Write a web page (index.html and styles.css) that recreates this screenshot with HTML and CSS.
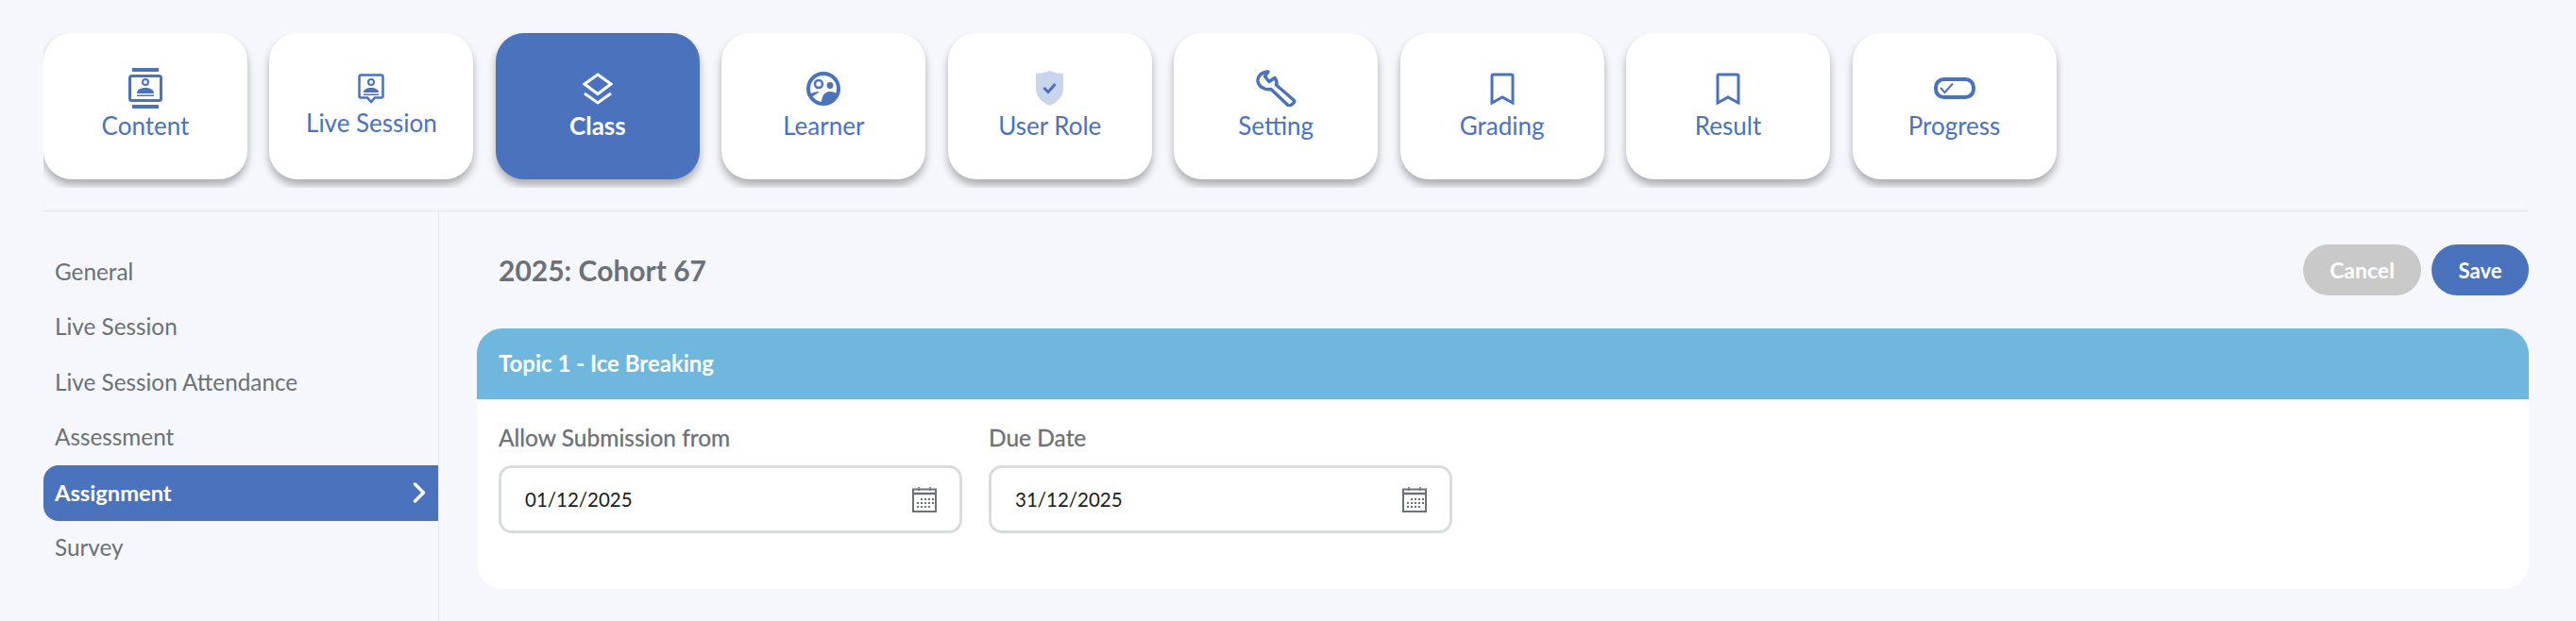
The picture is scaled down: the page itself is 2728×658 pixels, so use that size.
FILE: index.html
```html
<!DOCTYPE html>
<html lang="en">
<head>
  <meta charset="UTF-8">
  <meta name="viewport" content="width=device-width, initial-scale=1.0">
  <title>Class Assignment</title>
  <link rel="stylesheet" href="styles.css">
</head>
<body>
  <nav class="tiles">
    <a class="tile">
      <span class="icon-slot"><svg width="36" height="43" viewBox="0 0 36 43"><path d="M4 0h28v4H4zM4 39h28v4H4z" fill="#4a72bd"/><rect x="1.500" y="8.500" width="33" height="26" rx="2" fill="none" stroke="#4a72bd" stroke-width="3"/><circle cx="18" cy="15" r="3" fill="none" stroke="#4a72bd" stroke-width="2"/><path d="M9 27c0-4 4-6 9-6s9 2 9 6zM9 28.500h18V30H9z" fill="#4a72bd"/></svg></span>
      <span class="tile-label">Content</span>
    </a>
    <a class="tile tile-up">
      <span class="icon-slot"><svg width="28" height="32" viewBox="0 0 28 32"><path d="M3 1.500h22a1.500 1.500 0 0 1 1.500 1.500v21a1.500 1.500 0 0 1-1.500 1.500h-7L14 30l-4-4.500H3A1.500 1.500 0 0 1 1.500 24V3A1.500 1.500 0 0 1 3 1.500z" fill="none" stroke="#4a72bd" stroke-width="2.500"/><circle cx="14" cy="9" r="3" fill="none" stroke="#4a72bd" stroke-width="2"/><path d="M6 20c0-3.500 3.500-5 8-5s8 1.500 8 5zM6 21.500h16V23H6z" fill="#4a72bd"/></svg></span>
      <span class="tile-label">Live Session</span>
    </a>
    <a class="tile is-active">
      <span class="icon-slot"><svg width="32" height="34" viewBox="0 0 32 34"><path d="M16 2 30 12 16 22.500 2 12z" fill="none" stroke="#fff" stroke-width="3"/><path d="M2 22l14 10 14-10" fill="none" stroke="#fff" stroke-width="3"/></svg></span>
      <span class="tile-label">Class</span>
    </a>
    <a class="tile">
      <span class="icon-slot"><svg width="38" height="36" viewBox="0 0 38 36"><circle cx="19" cy="18" r="16" fill="none" stroke="#4a72bd" stroke-width="4"/><circle cx="14" cy="13" r="4" fill="none" stroke="#4a72bd" stroke-width="2.500"/><circle cx="26" cy="14.500" r="3.400" fill="#4a72bd"/><path d="M4 25c3-3 6-4 11-4l-4 3-5 3zM17 33c0-7 3-12 9-12 3 0 6 1 8 3-2 6-8 10-14 10z" fill="#4a72bd"/></svg></span>
      <span class="tile-label">Learner</span>
    </a>
    <a class="tile">
      <span class="icon-slot"><svg width="29" height="37" viewBox="0 0 29 37"><path d="M14.500 0c4 2 9 2.500 14.500 3V19c0 8-6 14-14.500 18C6 33 0 27 0 19V3C5.500 2.500 10.500 2 14.500 0z" fill="#c8d5ec"/><path d="M8.500 18l4.500 4.500L20.500 14" fill="none" stroke="#4a72bd" stroke-width="3"/></svg></span>
      <span class="tile-label">User Role</span>
    </a>
    <a class="tile">
      <span class="icon-slot"><svg width="43" height="39" viewBox="0 0 43 39"><path d="M13 2 9.500 7 14 12.500 20 8.500C22.500 12 22 15 21.500 16L40 32Q41.500 33.500 40 35L37 37.500Q35.500 39 34 37.500L16 20.500C10 22 3 18 2 12 1.500 7 6 2 13 2z" fill="none" stroke="#4a72bd" stroke-width="3.500" stroke-linejoin="round"/></svg></span>
      <span class="tile-label">Setting</span>
    </a>
    <a class="tile">
      <span class="icon-slot"><svg width="26" height="34" viewBox="0 0 26 34"><path d="M2 32V3.500A1.500 1.500 0 0 1 3.500 2h19A1.500 1.500 0 0 1 24 3.500V32l-11-6z" fill="none" stroke="#4a72bd" stroke-width="3"/></svg></span>
      <span class="tile-label">Grading</span>
    </a>
    <a class="tile">
      <span class="icon-slot"><svg width="26" height="34" viewBox="0 0 26 34"><path d="M2 32V3.500A1.500 1.500 0 0 1 3.500 2h19A1.500 1.500 0 0 1 24 3.500V32l-11-6z" fill="none" stroke="#4a72bd" stroke-width="3"/></svg></span>
      <span class="tile-label">Result</span>
    </a>
    <a class="tile">
      <span class="icon-slot"><svg width="44" height="23" viewBox="0 0 44 23"><rect x="2" y="2" width="40" height="19" rx="8.500" fill="none" stroke="#4a72bd" stroke-width="4"/><path d="M7 11l4.500 5L20 6.500" fill="none" stroke="#4a72bd" stroke-width="2"/></svg></span>
      <span class="tile-label">Progress</span>
    </a>
  </nav>

  <div class="layout">
    <aside class="sidebar">
      <a class="side-link">General</a>
      <a class="side-link">Live Session</a>
      <a class="side-link">Live Session Attendance</a>
      <a class="side-link">Assessment</a>
      <a class="side-link is-active">Assignment
        <svg width="14" height="22" viewBox="0 0 14 22"><path d="M2.500 2l9 9-9 9" fill="none" stroke="#fff" stroke-width="3.500" stroke-linecap="round" stroke-linejoin="round"/></svg>
      </a>
      <a class="side-link">Survey</a>
    </aside>

    <main class="main">
      <div class="main-head">
        <h1>2025: Cohort 67</h1>
        <div class="actions">
          <button class="btn btn-cancel" type="button">Cancel</button>
          <button class="btn btn-save" type="button">Save</button>
        </div>
      </div>

      <section class="card">
        <h2 class="card-head">Topic 1 - Ice Breaking</h2>
        <div class="card-body">
          <div class="field">
            <label>Allow Submission from</label>
            <div class="date-box">
              <span>01/12/2025</span>
              <svg width="26" height="30" viewBox="0 0 26 28"><use href="#cal"/></svg>
            </div>
          </div>
          <div class="field">
            <label>Due Date</label>
            <div class="date-box">
              <span>31/12/2025</span>
              <svg width="26" height="30" viewBox="0 0 26 28"><use href="#cal"/></svg>
            </div>
          </div>
        </div>
      </section>
    </main>
  </div>

  <svg class="defs" width="0" height="0">
    <symbol id="cal" viewBox="0 0 26 28">
      <path d="M7 1v4M19 1v4" stroke="#6c7278" stroke-width="1.500"/>
      <rect x="1" y="3.500" width="24" height="23.500" fill="none" stroke="#6c7278" stroke-width="2"/>
      <path d="M1 8h24" stroke="#6c7278" stroke-width="2.500"/>
      <path d="M9 13h2v2H9zM13 13h2v2h-2zM17 13h2v2h-2zM21 13h2v2h-2zM5 17h2v2H5zM9 17h2v2H9zM13 17h2v2h-2zM17 17h2v2h-2zM21 17h2v2h-2zM5 21h2v2H5zM9 21h2v2H9zM13 21h2v2h-2zM17 21h2v2h-2z" fill="#6c7278"/>
    </symbol>
  </svg>
</body>
</html>
```

FILE: styles.css
```css
* {
  margin: 0;
  padding: 0;
  box-sizing: border-box;
}

html, body {
  height: 100%;
}

body {
  display: flex;
  flex-direction: column;
  padding: 35px 50px 0 46px;
  background-color: #f5f7fc;
  font-family: "Lato", "Liberation Sans", sans-serif;
  color: #6b7177;
  overflow: hidden;
}

.tiles {
  display: flex;
  gap: 23.450px;
  height: 164px;
  margin-bottom: 24px;
  overflow: hidden;
  flex-shrink: 0;
}

.tile {
  display: flex;
  flex-direction: column;
  align-items: center;
  flex-shrink: 0;
  width: 216px;
  height: 155px;
  padding-top: 35px;
  background: #fff;
  border-radius: 30px;
  box-shadow: 0 6px 8px rgba(0, 0, 0, 0.3);
  color: #4a72bd;
  font-size: 26px;
}

.icon-slot {
  display: flex;
  align-items: center;
  justify-content: center;
  height: 47px;
}

.tile-label {
  line-height: 30px;
  margin-top: 1px;
}

.tile-up .tile-label {
  margin-top: -2px;
}

.tile.is-active {
  background: #4a72bd;
  color: #fff;
  font-weight: 700;
}

.layout {
  display: flex;
  flex: 1;
  border-top: 1px solid #e2e4ea;
}

.sidebar {
  width: 419px;
  padding-top: 35px;
  border-right: 1px solid #e2e4ea;
  flex-shrink: 0;
}

.side-link {
  display: flex;
  align-items: center;
  justify-content: space-between;
  height: 58.500px;
  padding: 0 13px 2px 12px;
  font-size: 24.300px;
}

.side-link.is-active {
  padding-bottom: 0;
  background: #4a72bd;
  color: #fff;
  font-size: 23.700px;
  font-weight: 700;
  border-radius: 16px 0 0 16px;
}

.main {
  flex: 1;
  padding: 35px 0 0 40px;
}

.main-head {
  display: flex;
  align-items: center;
  justify-content: space-between;
  height: 54px;
  padding-left: 23px;
  margin-bottom: 35px;
}

.main-head h1 {
  padding-bottom: 1px;
  font-size: 30px;
  font-weight: 700;
}

.actions {
  display: flex;
  gap: 11px;
}

.btn {
  height: 54px;
  border: none;
  border-radius: 27px;
  color: #fff;
  font-family: inherit;
  font-size: 22px;
  font-weight: 700;
}

.btn-cancel {
  width: 125px;
  background: #c9c9c9;
  font-size: 23px;
}

.btn-save {
  width: 103px;
  background: #4a72bd;
}

.card {
  background: #fff;
  border-radius: 27px;
  height: 276px;
}

.card-head {
  display: flex;
  align-items: center;
  height: 75px;
  padding: 0 0 2px 23px;
  background: #6fb7dc;
  border-radius: 27px 27px 0 0;
  color: #fff;
  font-size: 24px;
  font-weight: 700;
}

.card-body {
  display: flex;
  gap: 28px;
  padding: 27px 23px;
}

.field {
  width: 491px;
}

.field label {
  display: block;
  height: 28px;
  margin-bottom: 15px;
  font-size: 24.500px;
  line-height: 28px;
  -webkit-text-stroke: 0.3px #6b7177;
}

.date-box {
  display: flex;
  align-items: center;
  justify-content: space-between;
  height: 72px;
  padding: 0 24px 0 25px;
  background: #fff;
  border: 3px solid #d8dcdd;
  border-radius: 14px;
  color: #1c1c1c;
  font-size: 20.500px;
}

.defs {
  position: absolute;
}
```
